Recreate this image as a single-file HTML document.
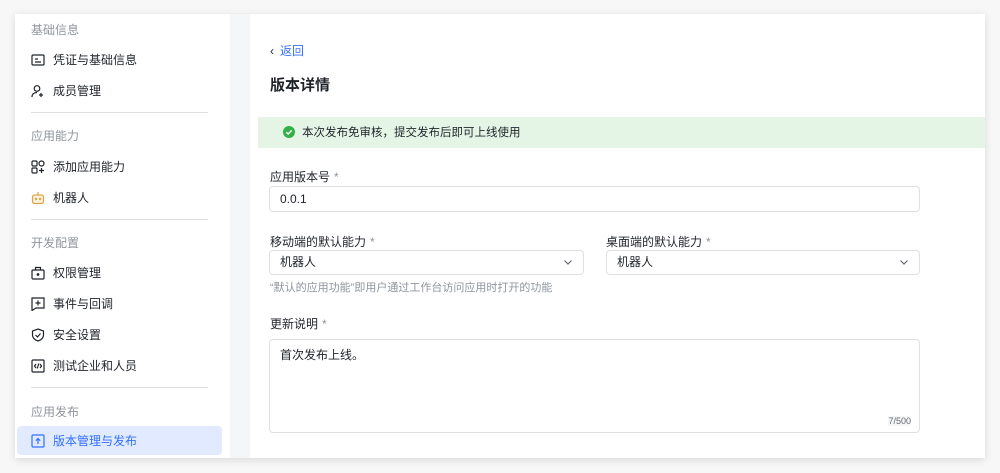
<!DOCTYPE html>
<html><head><meta charset="utf-8"><style>
*{margin:0;padding:0;box-sizing:border-box}
body{width:1000px;height:473px;background:#f7f7f7;font-family:"Liberation Sans","Noto Sans CJK SC",sans-serif;position:relative;overflow:hidden;color:#1f2329}
.card{position:absolute;left:15px;top:14px;width:970px;height:444px;background:#fff;box-shadow:0 2px 8px rgba(0,0,0,.12)}
.strip{position:absolute;left:230px;top:14px;width:20px;height:444px;background:#f5f6f7}
.main{position:absolute;left:250px;top:17px;width:735px;height:441px;background:#fff}
.a{position:absolute;white-space:nowrap}
.sh{font-size:12px;color:#8f959e;left:31px}
.it{font-size:12px;color:#1f2329;left:53px}
.ic{position:absolute;left:31px;width:14px;height:14px;margin-top:2px}
.dv{position:absolute;left:31px;width:177px;height:1px;background:#dee0e3}
.lbl{font-size:12px;color:#1f2329}
.lbl span{color:#8f959e;margin-left:4px}
.box{position:absolute;border:1px solid #dee0e3;border-radius:4px;background:#fff;font-size:12px;color:#1f2329;padding-left:10px}
.chev{position:absolute;right:10px;top:7px}
</style></head><body>
<div class="card"></div>
<div class="strip"></div>
<div class="main"></div>

<div class="a sh" style="top:21px">基础信息</div>
<svg class="ic" style="top:51px" viewBox="0 0 14 14" fill="none" stroke="#1f2329" stroke-width="1.2"><rect x="1" y="2" width="12" height="10" rx="1"/><path d="M4 6h3M4 9h6"/></svg>
<div class="a it" style="top:51px">凭证与基础信息</div>
<svg class="ic" style="top:82px" viewBox="0 0 14 14" fill="none" stroke="#1f2329" stroke-width="1.2"><circle cx="6" cy="4.5" r="2.8"/><path d="M1 13c0-3 2.2-4.5 5-4.5M10 9v4M8 11h4"/></svg>
<div class="a it" style="top:82px">成员管理</div>
<div class="dv" style="top:112px"></div>
<div class="a sh" style="top:127px">应用能力</div>
<svg class="ic" style="top:158px" viewBox="0 0 14 14" fill="none" stroke="#1f2329" stroke-width="1.2"><rect x="1" y="1" width="5" height="5" rx="1"/><rect x="1" y="8" width="5" height="5" rx="1"/><circle cx="10.5" cy="3.5" r="2.5"/><path d="M10.5 8v5M8 10.5h5"/></svg>
<div class="a it" style="top:158px">添加应用能力</div>
<svg class="ic" style="top:189px" viewBox="0 0 14 14" fill="none" stroke="#d9a548" stroke-width="1.2"><rect x="1.5" y="4" width="11" height="8.5" rx="2" fill="#fdf0dc"/><path d="M7 1v3"/><circle cx="5" cy="8" r=".6" fill="#d9a548"/><circle cx="9" cy="8" r=".6" fill="#d9a548"/></svg>
<div class="a it" style="top:189px">机器人</div>
<div class="dv" style="top:219px"></div>
<div class="a sh" style="top:234px">开发配置</div>
<svg class="ic" style="top:264px" viewBox="0 0 14 14" fill="none" stroke="#1f2329" stroke-width="1.2"><rect x="1" y="4" width="12" height="9" rx="1"/><path d="M4.5 4V1.5h5V4"/><circle cx="7" cy="8.5" r=".8" fill="#1f2329"/></svg>
<div class="a it" style="top:264px">权限管理</div>
<svg class="ic" style="top:295px" viewBox="0 0 14 14" fill="none" stroke="#1f2329" stroke-width="1.2"><path d="M1 1h12v10H5l-4 2.5z"/><path d="M7 3.5v5M4.5 6h5"/></svg>
<div class="a it" style="top:295px">事件与回调</div>
<svg class="ic" style="top:326px" viewBox="0 0 14 14" fill="none" stroke="#1f2329" stroke-width="1.2"><path d="M7 1l5.5 2v4c0 3-2.5 5-5.5 6C4 12 1.5 10 1.5 7V3z"/><path d="M4.5 7l2 2 3-3.5"/></svg>
<div class="a it" style="top:326px">安全设置</div>
<svg class="ic" style="top:357px" viewBox="0 0 14 14" fill="none" stroke="#1f2329" stroke-width="1.2"><rect x="1" y="1" width="12" height="12" rx="1"/><path d="M5 5L3.5 7 5 9M9 5l1.5 2L9 9M7.8 4.5l-1.6 5"/></svg>
<div class="a it" style="top:357px">测试企业和人员</div>
<div class="dv" style="top:387px"></div>
<div class="a sh" style="top:403px">应用发布</div>
<div style="position:absolute;left:17px;top:426px;width:205px;height:29px;background:#e1eaff;border-radius:4px"></div>
<svg class="ic" style="top:432px" viewBox="0 0 14 14" fill="none" stroke="#3370ff" stroke-width="1.2"><rect x="1" y="1" width="12" height="12" rx="1"/><path d="M7 10V4.5M4.8 6.7L7 4.5l2.2 2.2"/></svg>
<div class="a it" style="top:432px;color:#3370ff">版本管理与发布</div>

<div class="a" style="left:270px;top:42px;font-size:12px;color:#3370ff"><span style="color:#1f2329;margin-right:6px">‹</span>返回</div>
<div class="a" style="left:270px;top:74px;font-size:15px;font-weight:bold">版本详情</div>
<div style="position:absolute;left:258px;top:117px;width:727px;height:31px;background:#e4f5e6"></div>
<svg style="position:absolute;left:283px;top:126px" width="12" height="12" viewBox="0 0 12 12"><circle cx="6" cy="6" r="6" fill="#34b04a"/><path d="M3.3 6.2l1.8 1.8 3.6-3.6" stroke="#fff" stroke-width="1.4" fill="none"/></svg>
<div class="a" style="left:302px;top:124px;font-size:11.5px">本次发布免审核，提交发布后即可上线使用</div>

<div class="a lbl" style="left:270px;top:168px">应用版本号<span>*</span></div>
<div class="box" style="left:269px;top:186px;width:651px;height:26px;line-height:24px">0.0.1</div>
<div class="a lbl" style="left:270px;top:233px">移动端的默认能力<span>*</span></div>
<div class="box" style="left:269px;top:250px;width:315px;height:25px;line-height:23px">机器人<svg class="chev" width="10" height="8" viewBox="0 0 10 8"><path d="M1.5 2.5L5 6l3.5-3.5" stroke="#646a73" stroke-width="1.2" fill="none"/></svg></div>
<div class="a lbl" style="left:606px;top:233px">桌面端的默认能力<span>*</span></div>
<div class="box" style="left:606px;top:250px;width:314px;height:25px;line-height:23px">机器人<svg class="chev" width="10" height="8" viewBox="0 0 10 8"><path d="M1.5 2.5L5 6l3.5-3.5" stroke="#646a73" stroke-width="1.2" fill="none"/></svg></div>
<div class="a" style="left:270px;top:279px;font-size:11px;color:#8f959e">“默认的应用功能”即用户通过工作台访问应用时打开的功能</div>
<div class="a lbl" style="left:270px;top:315px">更新说明<span>*</span></div>
<div class="box" style="left:269px;top:339px;width:651px;height:94px;padding-top:6px">首次发布上线。<div style="position:absolute;right:8px;bottom:6px;font-size:9px;color:#646a73;background:#f5f6f7">7/500</div></div>
</body></html>
